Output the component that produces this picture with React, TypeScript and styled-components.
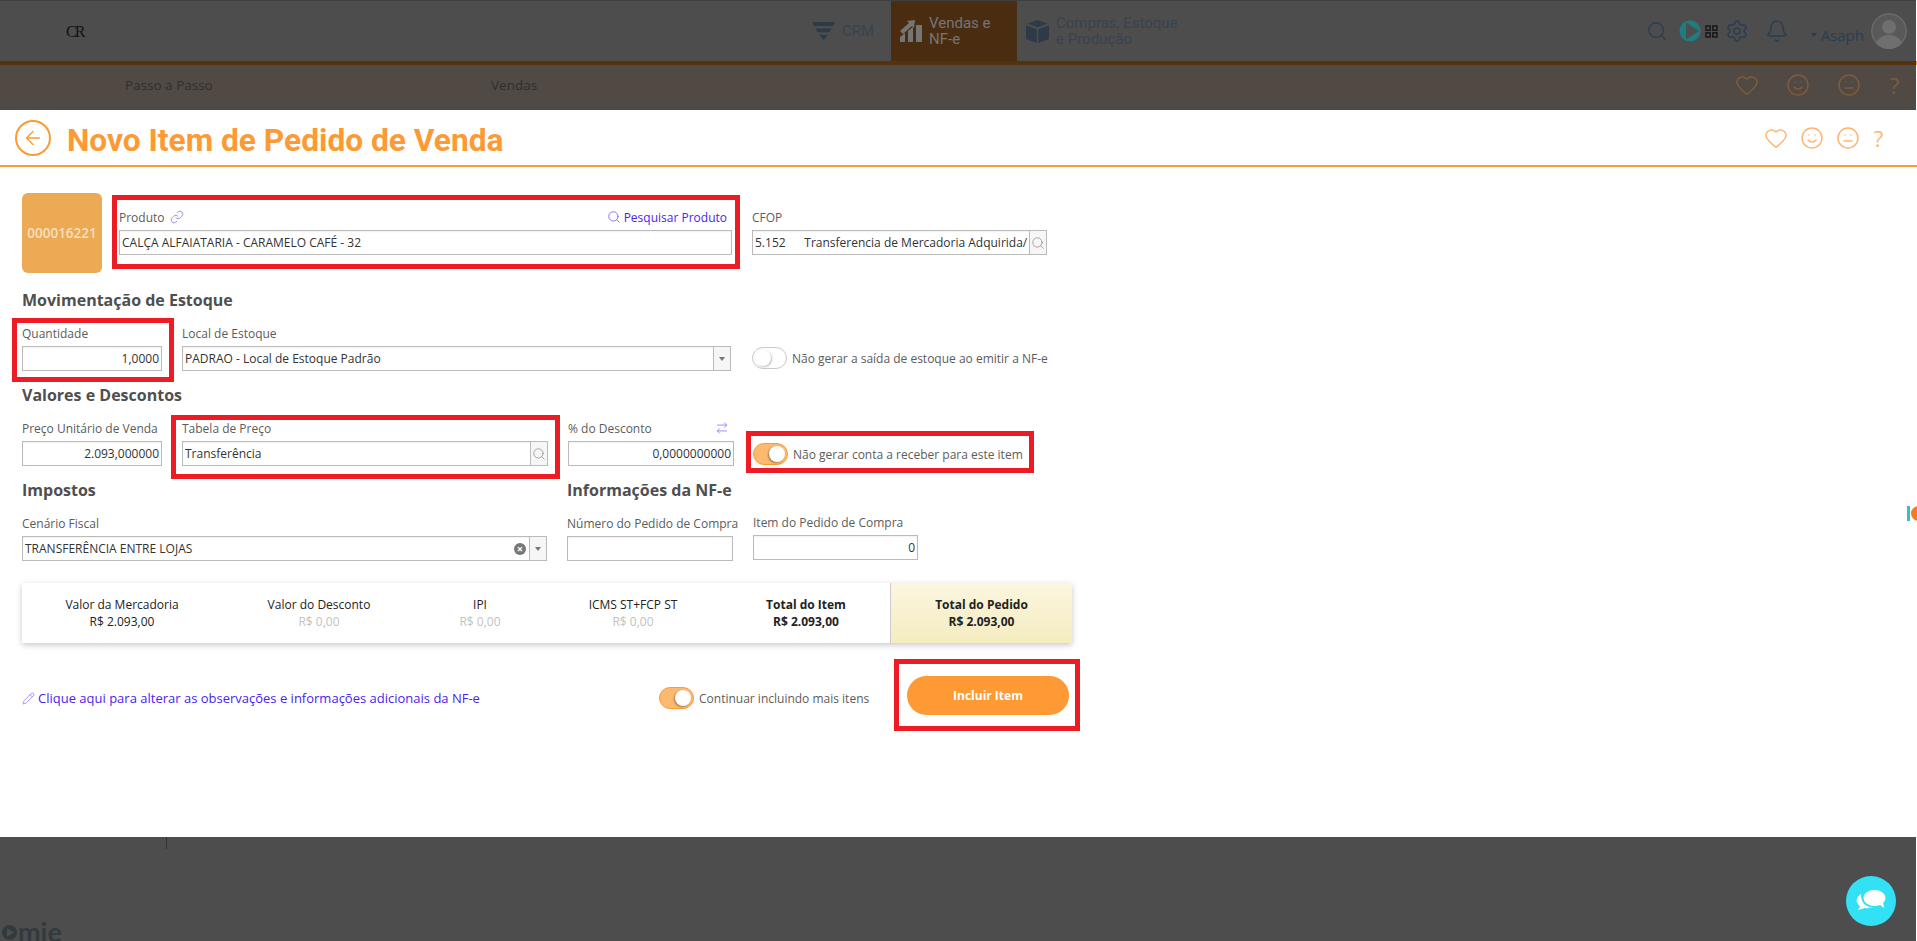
import React from "react";
import styled, { createGlobalStyle } from "styled-components";
import { Search, Settings, Bell, Heart, Smile, Meh, Link, Pencil, ArrowLeft, ArrowRightLeft } from "lucide-react";

const GlobalStyle = createGlobalStyle`
  html, body {
    margin: 0;
    padding: 0;
    height: 941px;
    overflow: hidden;
    background: #fff;
  }
  * {
    box-sizing: border-box;
  }
`;

const Shell = styled.div`
  position: relative;
  width: 1917px;
  height: 941px;
  padding-right: 1px;
  overflow: hidden;
  font-family: "Open Sans", "Liberation Sans", sans-serif;
  font-size: 12px;
  color: #5c5c5c;
`;

const TopBar = styled.header`
  display: flex;
  align-items: stretch;
  height: 61px;
  background: #4d4d4d;
  border-top: 1px solid #3f3f3f;
`;
const Logo = styled.div`
  margin: 21px 0 0 66px;
  width: 20px;
  font-family: "Liberation Serif", serif;
  font-size: 16px;
  line-height: 20px;
  letter-spacing: -2px;
  color: #111;
`;
const Nav = styled.nav`
  display: flex;
  margin-left: 714px;
`;
const NavItem = styled.div<{ $active?: boolean; $width: number; $pad: number }>`
  display: flex;
  align-items: center;
  gap: 7px;
  width: ${p => p.$width}px;
  padding-left: ${p => p.$pad}px;
  font-family: "Roboto", sans-serif;
  font-size: 15px;
  line-height: 16px;
  color: ${p => (p.$active ? "#757575" : "#39434d")};
  background: ${p => (p.$active ? "#4a2d11" : "transparent")};
`;
const UserArea = styled.div`
  display: flex;
  align-items: center;
  margin-left: auto;
  padding-right: 9px;
  color: #2b3d50;
`;
const IconSlot = styled.div<{ $ml: number }>`
  display: flex;
  margin-left: ${p => p.$ml}px;
`;
const UserName = styled.div`
  display: flex;
  align-items: center;
  gap: 4px;
  margin-left: 22px;
  margin-top: 8px;
  font-size: 15px;
  &::before {
    content: "";
    border-left: 3.5px solid transparent;
    border-right: 3.5px solid transparent;
    border-top: 4px solid #2b3d50;
  }
`;
const Avatar = styled.div`
  display: flex;
  margin-left: 7px;
  width: 36px;
  height: 36px;
  border-radius: 50%;
  overflow: hidden;
`;

const Band = styled.div`
  height: 4px;
  background: #54310f;
  box-shadow: 1px 0 0 #fd9a33;
`;

const SubBar = styled.div`
  display: flex;
  align-items: center;
  height: 45px;
  padding: 0 15px 5px 125px;
  background: linear-gradient(#514a44 0, #514a44 70%, #4d4a48 100%);
  font-size: 13.5px;
  color: #2e2e2e;
`;
const SubLink = styled.div<{ $width: number }>`
  width: ${p => p.$width}px;
`;
const Feedback = styled.div<{ $gap: number; $color: string }>`
  display: flex;
  align-items: center;
  gap: ${p => p.$gap}px;
  margin-left: auto;
  color: ${p => p.$color};
`;
const QuestionMark = styled.span`
  width: 13px;
  font-size: 22px;
  line-height: 22px;
  text-align: center;
`;

const Modal = styled.main`
  height: 727px;
  margin-right: -1px;
  background: #fff;
`;
const ModalHeader = styled.div`
  display: flex;
  align-items: center;
  height: 57px;
  padding: 0 32px 0 15px;
  border-bottom: 2px solid #fd9a33;
`;
const BackButton = styled.div`
  display: flex;
  align-items: center;
  justify-content: center;
  width: 36px;
  height: 36px;
  border: 2px solid #fd9a33;
  border-radius: 50%;
  color: #fd9a33;
`;
const Title = styled.h1`
  margin: 6px 0 0 16px;
  font-family: "Roboto", sans-serif;
  font-size: 31.7px;
  font-weight: 700;
  line-height: 36px;
  color: #fd9a33;
`;

const Form = styled.div`
  padding: 26px 0 0 22px;
`;
const Row = styled.div<{ $mt?: number; $gap?: number }>`
  display: flex;
  align-items: flex-start;
  gap: ${p => p.$gap ?? 20}px;
  margin-top: ${p => p.$mt ?? 13}px;
`;
const ProductTile = styled.div`
  display: flex;
  align-items: center;
  justify-content: center;
  width: 80px;
  height: 80px;
  margin-right: -3px;
  border-radius: 6px;
  background: #ecaa55;
  font-size: 13.5px;
  font-weight: 600;
  color: #f8dfbe;
`;
const Field = styled.div<{ $width: number; $mt?: number }>`
  position: relative;
  width: ${p => p.$width}px;
  margin-top: ${p => p.$mt ?? 0}px;
`;
const LabelRow = styled.div`
  display: flex;
  align-items: center;
  justify-content: space-between;
  height: 20px;
  margin-bottom: 3px;
  white-space: nowrap;
`;
const LabelGroup = styled.span`
  display: flex;
  align-items: center;
  gap: 5px;
`;
const ActionLink = styled.span`
  display: flex;
  align-items: center;
  gap: 3px;
  padding-right: 5px;
  color: #4b21f5;
`;
const LinkIcon = styled.span`
  display: flex;
  color: #7a66ff;
`;
const Box = styled.div`
  display: flex;
  align-items: center;
  height: 25px;
  border: 1px solid #bbb;
  background: #fff;
  box-shadow: inset 0 1px 2px rgba(0, 0, 0, 0.06);
  color: #333;
`;
const Value = styled.div<{ $right?: boolean }>`
  flex: 1;
  min-width: 0;
  padding: 0 2px;
  overflow: hidden;
  white-space: pre;
  line-height: 23px;
  text-align: ${p => (p.$right ? "right" : "left")};
`;
const AddOn = styled.div`
  display: flex;
  align-items: center;
  justify-content: center;
  width: 17px;
  height: 23px;
  border-left: 1px solid #bbb;
  background: #f6f6f6;
  color: #888;
`;
const Caret = styled.span`
  border-left: 3.5px solid transparent;
  border-right: 3.5px solid transparent;
  border-top: 4px solid #777;
`;
const ClearIcon = styled.span`
  display: flex;
  align-items: center;
  justify-content: center;
  width: 12px;
  height: 12px;
  margin-right: 3px;
  border-radius: 50%;
  background: #777;
  color: #fff;
  font-size: 11px;
  font-weight: 700;
  line-height: 12px;
`;
const SectionTitle = styled.h2<{ $mt?: number }>`
  margin: ${p => p.$mt ?? 0}px 0 0;
  height: 20px;
  font-size: 16px;
  font-weight: 700;
  line-height: 20px;
  color: #4f4f4f;
`;
const HeadingRow = styled.div`
  display: grid;
  grid-template-columns: 545px auto;
  margin-top: 14px;
`;
const SwitchLine = styled.div<{ $mt?: number; $ml?: number }>`
  position: relative;
  display: flex;
  align-items: center;
  gap: 5px;
  margin-top: ${p => p.$mt ?? 0}px;
  margin-left: ${p => p.$ml ?? 0}px;
  white-space: nowrap;
`;
const Switch = styled.span<{ $on?: boolean }>`
  position: relative;
  flex: none;
  width: 35px;
  height: 22px;
  border: 1px solid ${p => (p.$on ? "#fd9a33" : "#c9c9c9")};
  border-radius: 11px;
  background: ${p => (p.$on ? "#fdb970" : "#fff")};
  &::after {
    content: "";
    position: absolute;
    top: 2px;
    left: ${p => (p.$on ? "15px" : "2px")};
    width: 16px;
    height: 16px;
    border-radius: 50%;
    background: #fff;
    box-shadow: ${p => (p.$on ? "-1px 1px 2px rgba(0,0,0,.35)" : "1px 1px 2px rgba(0,0,0,.25)")};
  }
`;

const Summary = styled.div`
  display: grid;
  grid-template-columns: 200px 194px 128px 178px 168px 182px;
  width: 1050px;
  height: 60px;
  margin-top: 22px;
  box-shadow: 0 2px 6px rgba(0, 0, 0, 0.22);
  background: #fff;
`;
const SummaryCell = styled.div<{ $bold?: boolean; $total?: boolean }>`
  display: flex;
  flex-direction: column;
  align-items: center;
  padding-top: 13px;
  font-weight: ${p => (p.$bold ? 700 : 400)};
  line-height: 17px;
  color: #222;
  ${p =>
    p.$total
      ? "border-left: 1px solid #ccc; background: linear-gradient(#fbf6df, #f5ecc0);"
      : ""}
`;
const Amount = styled.span<{ $muted?: boolean }>`
  color: ${p => (p.$muted ? "#c2c2c2" : "inherit")};
`;

const ActionsRow = styled.div`
  display: grid;
  grid-template-columns: 637px 248px 162px;
  align-items: center;
  margin-top: 33px;
`;
const NotesLink = styled.div`
  display: flex;
  align-items: center;
  gap: 3px;
  padding-top: 5px;
  font-size: 13px;
  color: #4b21f5;
`;
const ContinueLine = styled(SwitchLine)`
  padding-top: 5px;
`;
const IncludeButton = styled.div`
  position: relative;
  display: flex;
  align-items: center;
  justify-content: center;
  height: 39px;
  border-radius: 20px;
  background: #fd9a33;
  font-weight: 700;
  color: #fff;
`;

const RedFrame = styled.span<{ $t: number; $r: number; $b: number; $l: number }>`
  position: absolute;
  top: ${p => p.$t}px;
  right: ${p => p.$r}px;
  bottom: ${p => p.$b}px;
  left: ${p => p.$l}px;
  border: 5px solid #ed1c24;
  pointer-events: none;
`;

const Footer = styled.footer`
  position: relative;
  display: flex;
  align-items: flex-end;
  height: 104px;
  padding-left: 2px;
  overflow: hidden;
  background: #4d4d4d;
`;
const FooterTick = styled.span`
  position: absolute;
  top: 0;
  left: 166px;
  width: 1px;
  height: 12px;
  background: #333;
`;
const OmieLogo = styled.div`
  display: flex;
  align-items: center;
  gap: 1px;
  height: 18px;
  font-family: "Lato", sans-serif;
  font-size: 27px;
  font-weight: 700;
  line-height: 18px;
  color: #333a3e;
`;
const ChatButton = styled.div`
  position: absolute;
  right: 20px;
  bottom: 15px;
  display: flex;
  align-items: center;
  justify-content: center;
  width: 50px;
  height: 50px;
  border-radius: 50%;
  background: #33e1f5;
`;
const EdgeWidget = styled.div`
  position: absolute;
  top: 506px;
  right: 0;
  display: flex;
  gap: 1px;
  width: 10px;
  height: 15px;
  overflow: hidden;
  &::before {
    content: "";
    flex: none;
    width: 3px;
    background: #2ec4c4;
  }
  &::after {
    content: "";
    flex: none;
    width: 15px;
    height: 15px;
    border-radius: 50%;
    background: #f47b20;
  }
`;

function FunnelIcon() {
  return (
    <svg width="23" height="18" viewBox="0 0 23 18" fill="#2e3b47">
      <path d="M0 0h23l-2.2 4H2.2z" />
      <path d="M3.6 6.5h15.8l-2 3.8H5.6z" />
      <path d="M7 12.8h9L11.5 18z" />
    </svg>
  );
}

function SalesIcon() {
  return (
    <svg width="22" height="22" viewBox="0 0 22 22" fill="#757575">
      <path d="M0 22v-5l5-4v9z" />
      <path d="M8 22V11l5-4v15z" />
      <path d="M16 22V5h6v17z" />
      <path d="M0 11l9-8-2-2 8-1-1 8-2-2-9 8z" />
    </svg>
  );
}

function BoxIcon() {
  return (
    <svg width="23" height="23" viewBox="0 0 23 23" fill="#2e3b47">
      <path d="M11.5 0l10 3.5-10 3.8-10-3.8z" />
      <path d="M0 5.2l10.7 4V23L0 19z" />
      <path d="M23 5.2l-10.7 4V23L23 19z" />
    </svg>
  );
}

function PlayBadge() {
  return (
    <svg width="22" height="22" viewBox="0 0 22 22">
      <circle cx="11" cy="11" r="10.5" fill="#1d7d80" />
      <path d="M7 2.5L20 11 7 19.5z" fill="#4d4d4d" />
    </svg>
  );
}

function AppsIcon() {
  return (
    <svg width="13" height="13" viewBox="0 0 13 13" fill="none" stroke="#111" strokeWidth="1.3">
      <rect x="1" y="1" width="4.2" height="4.2" />
      <rect x="7.8" y="1" width="4.2" height="4.2" />
      <rect x="1" y="7.8" width="4.2" height="4.2" />
      <rect x="7.8" y="7.8" width="4.2" height="4.2" />
    </svg>
  );
}

function AvatarIcon() {
  return (
    <svg width="36" height="36" viewBox="0 0 36 36">
      <circle cx="18" cy="18" r="18" fill="#6b6b6b" />
      <circle cx="18" cy="18" r="16.5" fill="#595959" />
      <circle cx="18" cy="14" r="7" fill="#6f6f6f" />
      <path d="M5 31c2-7 8-9 13-9s11 2 13 9a16 16 0 0 1-26 0z" fill="#6f6f6f" />
    </svg>
  );
}

function ChatIcon() {
  return (
    <svg width="30" height="24" viewBox="0 0 30 24" fill="#fff">
      <path d="M5 5c-3 2-5 5-4 8 .5 2 2 3 3 4l-2 4 7-2c3 .5 6 0 8-1-6 1-12-3-12-13z" />
      <ellipse cx="18.5" cy="9" rx="11" ry="8" />
      <path d="M23 15l5 4-1-6z" />
    </svg>
  );
}

function OmieMark() {
  return (
    <svg width="15" height="15" viewBox="0 0 15 15">
      <circle cx="7.5" cy="7.5" r="7.5" fill="#333a3e" />
      <path d="M5 3.5L12 7.5 5 11.5z" fill="#4d4d4d" />
    </svg>
  );
}

function FeedbackIcons({ gap, color }: { gap: number; color: string }) {
  return (
    <Feedback $gap={gap} $color={color}>
      <Heart size={24} strokeWidth={1.5} />
      <Smile size={24} strokeWidth={1.5} />
      <Meh size={24} strokeWidth={1.5} />
      <QuestionMark>?</QuestionMark>
    </Feedback>
  );
}

const SUMMARY = [
  { label: "Valor da Mercadoria", amount: "R$ 2.093,00" },
  { label: "Valor do Desconto", amount: "R$ 0,00", muted: true },
  { label: "IPI", amount: "R$ 0,00", muted: true },
  { label: "ICMS ST+FCP ST", amount: "R$ 0,00", muted: true },
  { label: "Total do Item", amount: "R$ 2.093,00", bold: true },
  { label: "Total do Pedido", amount: "R$ 2.093,00", bold: true, total: true }
];

export default function App() {
  return (
    <Shell>
      <GlobalStyle />
      <TopBar>
        <Logo>CR</Logo>
        <Nav>
          <NavItem $width={91} $pad={12}>
            <FunnelIcon />
            CRM
          </NavItem>
          <NavItem $width={126} $pad={9} $active>
            <SalesIcon />
            <span>
              Vendas e
              <br />
              NF-e
            </span>
          </NavItem>
          <NavItem $width={170} $pad={9}>
            <BoxIcon />
            <span>
              Compras, Estoque
              <br />e Produção
            </span>
          </NavItem>
        </Nav>
        <UserArea>
          <IconSlot $ml={0}>
            <Search size={22} strokeWidth={1.5} />
          </IconSlot>
          <IconSlot $ml={11}>
            <PlayBadge />
          </IconSlot>
          <IconSlot $ml={4}>
            <AppsIcon />
          </IconSlot>
          <IconSlot $ml={7}>
            <Settings size={24} strokeWidth={1.5} />
          </IconSlot>
          <IconSlot $ml={16}>
            <Bell size={24} strokeWidth={1.5} />
          </IconSlot>
          <UserName>Asaph</UserName>
          <Avatar>
            <AvatarIcon />
          </Avatar>
        </UserArea>
      </TopBar>
      <Band />
      <SubBar>
        <SubLink $width={366}>Passo a Passo</SubLink>
        <SubLink $width={60}>Vendas</SubLink>
        <FeedbackIcons gap={27} color="#7d5b3c" />
      </SubBar>

      <Modal>
        <ModalHeader>
          <BackButton>
            <ArrowLeft size={22} strokeWidth={1.5} />
          </BackButton>
          <Title>Novo Item de Pedido de Venda</Title>
          <FeedbackIcons gap={12} color="#fdb574" />
        </ModalHeader>

        <Form>
          <Row $mt={0} $gap={20}>
            <ProductTile>000016221</ProductTile>
            <Field $width={613} $mt={14}>
              <LabelRow>
                <LabelGroup>
                  Produto
                  <LinkIcon>
                    <Link size={14} strokeWidth={1.25} />
                  </LinkIcon>
                </LabelGroup>
                <ActionLink>
                  <LinkIcon>
                    <Search size={14} strokeWidth={1.5} />
                  </LinkIcon>
                  Pesquisar Produto
                </ActionLink>
              </LabelRow>
              <Box>
                <Value>CALÇA ALFAIATARIA - CARAMELO CAFÉ - 32</Value>
              </Box>
              <RedFrame $t={-12} $r={-8} $b={-14} $l={-7} />
            </Field>
            <Field $width={295} $mt={14}>
              <LabelRow>CFOP</LabelRow>
              <Box>
                <Value>{"5.152      Transferencia de Mercadoria Adquirida/"}</Value>
                <AddOn>
                  <Search size={14} strokeWidth={1.25} />
                </AddOn>
              </Box>
            </Field>
          </Row>

          <SectionTitle $mt={17}>Movimentação de Estoque</SectionTitle>
          <Row>
            <Field $width={140}>
              <LabelRow>Quantidade</LabelRow>
              <Box>
                <Value $right>1,0000</Value>
              </Box>
              <RedFrame $t={-5} $r={-12} $b={-11} $l={-10} />
            </Field>
            <Field $width={549}>
              <LabelRow>Local de Estoque</LabelRow>
              <Box>
                <Value>PADRAO - Local de Estoque Padrão</Value>
                <AddOn>
                  <Caret />
                </AddOn>
              </Box>
            </Field>
            <SwitchLine $mt={24} $ml={1}>
              <Switch />
              Não gerar a saída de estoque ao emitir a NF-e
            </SwitchLine>
          </Row>

          <SectionTitle $mt={14}>Valores e Descontos</SectionTitle>
          <Row>
            <Field $width={140}>
              <LabelRow>Preço Unitário de Venda</LabelRow>
              <Box>
                <Value $right>2.093,000000</Value>
              </Box>
            </Field>
            <Field $width={366}>
              <LabelRow>Tabela de Preço</LabelRow>
              <Box>
                <Value>Transferência</Value>
                <AddOn>
                  <Search size={14} strokeWidth={1.25} />
                </AddOn>
              </Box>
              <RedFrame $t={-3} $r={-12} $b={-13} $l={-11} />
            </Field>
            <Field $width={166} $mt={0}>
              <LabelRow>
                % do Desconto
                <ActionLink>
                  <LinkIcon>
                    <ArrowRightLeft size={14} strokeWidth={1.25} />
                  </LinkIcon>
                </ActionLink>
              </LabelRow>
              <Box>
                <Value $right>0,0000000000</Value>
              </Box>
            </Field>
            <SwitchLine $mt={25} $ml={-1}>
              <Switch $on />
              Não gerar conta a receber para este item
              <RedFrame $t={-12} $r={-11} $b={-8} $l={-7} />
            </SwitchLine>
          </Row>

          <HeadingRow>
            <SectionTitle>Impostos</SectionTitle>
            <SectionTitle>Informações da NF-e</SectionTitle>
          </HeadingRow>
          <Row>
            <Field $width={525}>
              <LabelRow>Cenário Fiscal</LabelRow>
              <Box>
                <Value>TRANSFERÊNCIA ENTRE LOJAS</Value>
                <ClearIcon>×</ClearIcon>
                <AddOn>
                  <Caret />
                </AddOn>
              </Box>
            </Field>
            <Field $width={166}>
              <LabelRow>Número do Pedido de Compra</LabelRow>
              <Box />
            </Field>
            <Field $width={165} $mt={-1}>
              <LabelRow>Item do Pedido de Compra</LabelRow>
              <Box>
                <Value $right>0</Value>
              </Box>
            </Field>
          </Row>

          <Summary>
            {SUMMARY.map(item => (
              <SummaryCell key={item.label} $bold={item.bold} $total={item.total}>
                <span>{item.label}</span>
                <Amount $muted={item.muted}>{item.amount}</Amount>
              </SummaryCell>
            ))}
          </Summary>

          <ActionsRow>
            <NotesLink>
              <LinkIcon>
                <Pencil size={13} strokeWidth={1.25} />
              </LinkIcon>
              Clique aqui para alterar as observações e informações adicionais da NF-e
            </NotesLink>
            <ContinueLine>
              <Switch $on />
              Continuar incluindo mais itens
            </ContinueLine>
            <IncludeButton>
              Incluir Item
              <RedFrame $t={-17} $r={-11} $b={-16} $l={-13} />
            </IncludeButton>
          </ActionsRow>
        </Form>
      </Modal>

      <Footer>
        <FooterTick />
        <OmieLogo>
          <OmieMark />
          mie
        </OmieLogo>
        <ChatButton>
          <ChatIcon />
        </ChatButton>
      </Footer>
      <EdgeWidget />
    </Shell>
  );
}
